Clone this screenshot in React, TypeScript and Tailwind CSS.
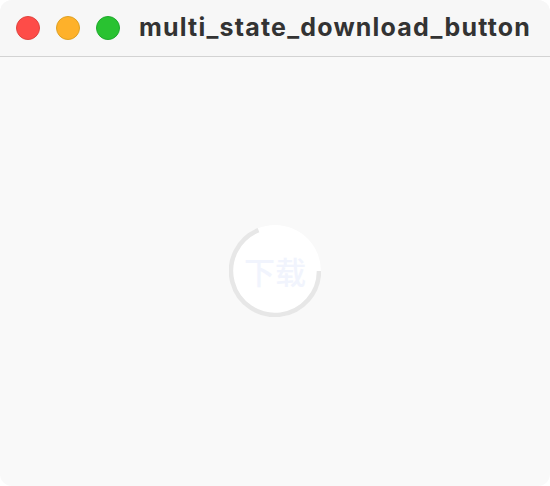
import React from 'react';

const R = 44;
const C = 46;
// gray track arc: from 3 o'clock clockwise round to just left of 12 o'clock
const end = (338 * Math.PI) / 180;
const arcPath = `M ${C + R} ${C} A ${R} ${R} 0 1 1 ${(C + R * Math.sin(end)).toFixed(2)} ${(C - R * Math.cos(end)).toFixed(2)}`;

function TrafficLights() {
  return (
    <div className="flex items-center gap-[16px]">
      <span className="h-[24px] w-[24px] rounded-full border border-[#e0443e] bg-[#fe4c48]" />
      <span className="h-[24px] w-[24px] rounded-full border border-[#dea123] bg-[#feb12a]" />
      <span className="h-[24px] w-[24px] rounded-full border border-[#1eaa2c] bg-[#29c231]" />
    </div>
  );
}

function DownloadButton() {
  return (
    <div className="relative flex h-[92px] w-[92px] items-center justify-center">
      <svg width={92} height={92} viewBox="0 0 92 92" className="absolute inset-0">
        <circle cx={C} cy={C} r={46} fill="#ffffff" />
        <path d={arcPath} fill="none" stroke="#e7e7e7" strokeWidth={4.5} />
      </svg>
      <span className="relative text-[31px] font-medium leading-none text-[#f1f4fd] [font-family:'Noto_Sans_CJK_SC',sans-serif]">
        下载
      </span>
    </div>
  );
}

export default function App() {
  return (
    <div className="h-[486px] w-[550px] bg-white">
      <div className="flex h-full w-full flex-col overflow-hidden rounded-[12px] bg-[#f9f9f9]">
        <div className="flex h-[57px] shrink-0 items-center gap-[19px] border-b border-[#d3d3d3] bg-[#f7f7f7] pl-[16px] pb-[1px]">
          <TrafficLights />
          <span className="text-[25px] font-bold tracking-[1.2px] text-[#333333] [font-family:Inter,'Liberation_Sans',sans-serif]">
            multi_state_download_button
          </span>
        </div>
        <div className="flex flex-1 items-center justify-center pb-[2px]">
          <DownloadButton />
        </div>
      </div>
    </div>
  );
}
